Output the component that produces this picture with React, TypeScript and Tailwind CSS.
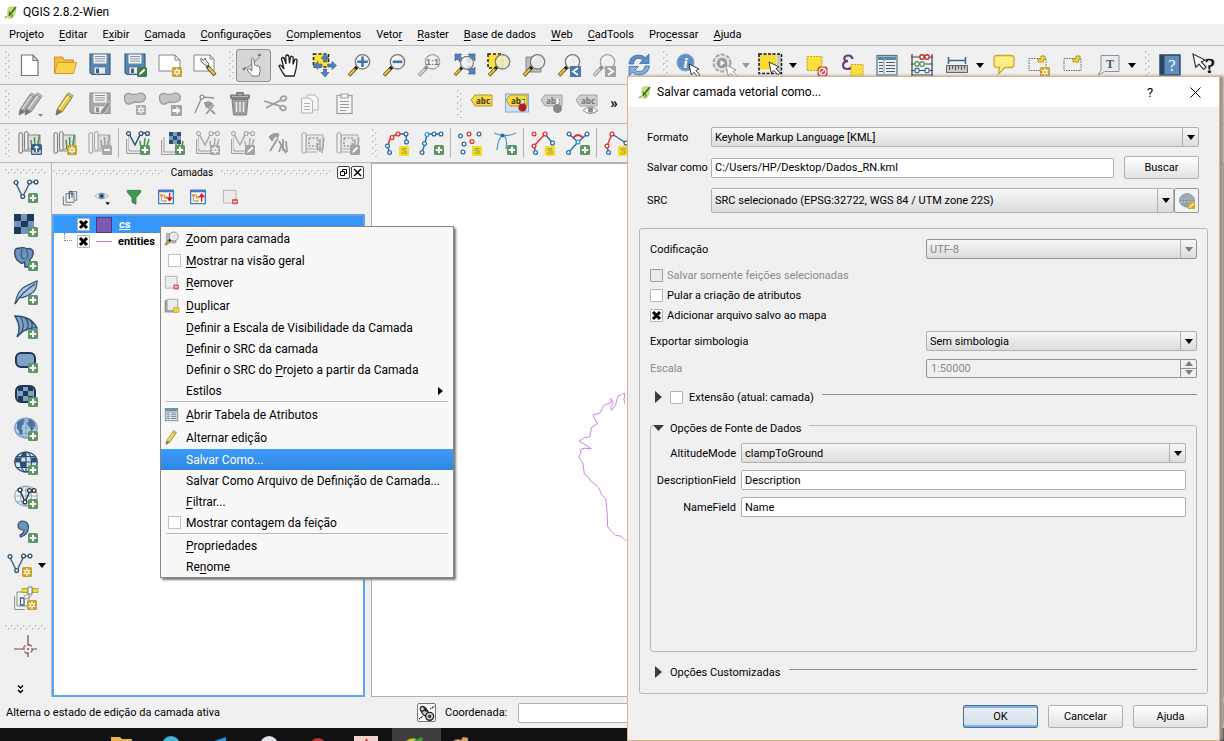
import { type ReactNode } from "react";
import clsx from "clsx";

/* ---------- icon parts ---------- */

const NAVY = "#2f4f70";
const GRAY = "#9b9b9b";
const BLUE = "#2e6da4";
const RED = "#e03232";

function PlusBadge({ x = 14, y = 14 }: { x?: number; y?: number }) {
  return (
    <g transform={`translate(${x} ${y})`}>
      <rect width="10" height="10" rx="1.5" fill="#5f9467" />
      <path d="M5 1.8v6.4M1.8 5h6.4" stroke="#fff" strokeWidth="2" />
    </g>
  );
}

function StarBadge({ x = 14, y = 14, gray }: { x?: number; y?: number; gray?: boolean }) {
  return (
    <g transform={`translate(${x} ${y})`}>
      <rect width="10" height="10" rx="1.5" fill={gray ? "#a9a9a9" : "#c9a227"} />
      <path d="M5 1.3v7.4M1.8 3.1l6.4 3.8M8.2 3.1L1.8 6.9" stroke="#fff" strokeWidth="1.4" />
      <circle cx="5" cy="5" r="1" fill={gray ? "#a9a9a9" : "#c9a227"} />
    </g>
  );
}

function SnapBadge({ x = 14, y = 15 }: { x?: number; y?: number }) {
  return (
    <g transform={`translate(${x} ${y})`}>
      <rect width="10" height="10" rx="1" fill="#f2dc2a" />
      <text x="5" y="8.4" textAnchor="middle" fontSize="9" fontWeight="700" fill="#a8a13a" fontFamily="Liberation Sans">
        S
      </text>
    </g>
  );
}

function PenBadge({ gray, x = 14, y = 14 }: { gray?: boolean; x?: number; y?: number }) {
  return (
    <g transform={`translate(${x} ${y})`}>
      <rect width="10" height="10" rx="1.5" fill={gray ? "#a3a3a3" : "#3f7f4c"} />
      <path d="M2 8l1-2.4L7 1.7l1.4 1.5L4.3 7z" fill="#fff" />
    </g>
  );
}

function Lens({ gray }: { gray?: boolean }) {
  return (
    <>
      <path d="M10 14L2 22.5" stroke={gray ? "#8a8a8a" : "#5b4a1c"} strokeWidth="3.6" />
      <path d="M8.5 15.5L2.3 22" stroke={gray ? "#d9d9d9" : "#f1c232"} strokeWidth="2" />
      <path d="M10.6 13.4L8 16" stroke={gray ? "#8a8a8a" : "#222"} strokeWidth="3" />
      <circle cx="15.5" cy="8.8" r="7.2" fill="#eef0f0" fillOpacity=".85" stroke={gray ? "#a3a3a3" : "#7c7c7c"} strokeWidth="1.3" />
      <path d="M10.5 8a5 5 0 0 1 4-4" stroke="#fff" strokeWidth="1.2" fill="none" />
    </>
  );
}

function Node({ x, y, c = NAVY }: { x: number; y: number; c?: string }) {
  return <circle cx={x} cy={y} r="1.9" fill="#fff" stroke={c} strokeWidth="1.3" />;
}

function Pencil({ main = "#e8c93f", edge = "#8a7420" }: { main?: string; edge?: string }) {
  return (
    <g>
      <path d="M3 23l1.3-6L14 2.5l5 3L9.3 19.6z" fill={main} stroke={edge} strokeWidth="1" />
      <path d="M14 2.5l1.3-1.7 5 3L19 5.5z" fill="#c4c4c4" stroke={edge} strokeWidth=".7" />
      <path d="M6 17.2L15.7 3.8" stroke="#fff" strokeOpacity=".6" strokeWidth="1.4" />
      <path d="M3 23l1.3-6 5 2.6z" fill="#777" />
    </g>
  );
}

function Floppy({ body, edge }: { body: string; edge: string }) {
  return (
    <g>
      <path d="M2 1h20v20.5H4L2 19.5z" fill={body} stroke={edge} strokeWidth="1.2" />
      <rect x="5.5" y="1.5" width="13" height="9" fill="#f3f6f9" />
      <path d="M7 3.5h10M7 5.8h10M7 8.1h10" stroke="#8b9096" strokeWidth="1" />
      <rect x="6" y="14" width="11.5" height="7" fill="#e8ebee" stroke={edge} strokeWidth=".6" />
      <rect x="8" y="15.5" width="3" height="4.5" fill={edge} />
    </g>
  );
}

function Blob() {
  return (
    <path
      d="M1.5 5Q2 1 7 1.5q4 2 9-.3 6-.5 6.5 4 0 4-5 5-3 .3-5 0-3 0-5.5 2Q1 12.5 1.5 5z"
      fill="#c4c4c4"
      stroke="#999"
      strokeWidth="1.2"
    />
  );
}

// rolled mapset with grass blades on its right side
function Mapset({ gray, children }: { gray?: boolean; children?: ReactNode }) {
  const c = gray ? "#a9a9a9" : "#858585";
  return (
    <g>
      <path d="M9 4h13v14H8z" fill="#dedede" stroke={c} />
      <path d="M1 3q2-3 3.5 0v18q-1.8 2.5-3.5 0zM6.5 2q2-3 3.5 0v16q-1.8 3-3.5 0z" fill="#f2f2f2" stroke={c} strokeWidth="1.2" />
      <path d="M4.5 20h14" stroke={c} />
      <path d="M14 18l-1-9M17 18l-.5-12M19 18l2.5-14" stroke={gray ? "#a0a0a0" : "#4d9152"} strokeWidth="1.5" />
      {children}
    </g>
  );
}

function MapRoll({ children }: { children?: ReactNode }) {
  return (
    <g>
      <path d="M5 4h17v14H5z" fill="#e8e8e8" stroke="#a9a9a9" />
      <path d="M1 3q2-3 4 0v18q-2 2.5-4 0z" fill="#f2f2f2" stroke="#a9a9a9" strokeWidth="1.2" />
      <path d="M8 7h9v8H8z" fill="none" stroke="#777" strokeDasharray="2 1.5" />
      <path d="M17 20l-1-8M19 21V8M21 22l2-15" stroke="#a0a0a0" strokeWidth="1.4" />
      <path d="M4 21h12" stroke="#a9a9a9" />
      {children}
    </g>
  );
}

function GrassVector({ gray, children }: { gray?: boolean; children?: ReactNode }) {
  const c = gray ? "#a9a9a9" : NAVY;
  return (
    <g>
      <path d="M3 4v16h12M.6 8v14.4h14" fill="none" stroke="#989898" />
      <path d="M3 5h18v13H3z" fill="#ececec" />
      <path d="M15 18l-1-8M18 18l1-11M20 18l3-10" stroke={gray ? "#aaa" : "#4d9152"} strokeWidth="1.5" />
      <path d="M2.5 2L9 14 15 2h6" fill="none" stroke={c} strokeWidth="1.5" />
      <Node x={2.5} y={2.5} c={c} />
      <Node x={15} y={2.5} c={c} />
      <Node x={21.5} y={2.5} c={c} />
      {children}
    </g>
  );
}

function VectorLine({ children }: { children?: ReactNode }) {
  return (
    <g>
      <path d="M1.7 4l7 14L16 3h6" fill="none" stroke="#4b6b8c" strokeWidth="1.6" />
      <Node x={2} y={3.5} />
      <Node x={8.7} y={17.5} />
      <Node x={15.5} y={3} />
      <Node x={22} y={3} />
      {children}
    </g>
  );
}

function Cursor({ x = 0, y = 0, gray }: { x?: number; y?: number; gray?: boolean }) {
  return (
    <path
      transform={`translate(${x} ${y})`}
      d="M0 0l2.3 11 2.6-2.6 4 4.4 2-2-4-4.2L10 5z"
      fill="#fff"
      stroke={gray ? "#999" : "#333"}
      strokeWidth="1"
    />
  );
}

function Tag({ gray, children }: { gray?: boolean; children?: ReactNode }) {
  return (
    <g>
      <path d="M1 8l4-5h17v11H5z" fill={gray ? "#cfcfcf" : "#f5d949"} stroke={gray ? "#a2a2a2" : "#b9971c"} />
      <text x="13" y="11.5" textAnchor="middle" fontSize="8" fontWeight="700" fontFamily="Open Sans" fill={gray ? "#777" : "#433a10"}>
        abc
      </text>
      {children}
    </g>
  );
}

function Globe({ fill, line }: { fill: string; line: string }) {
  return (
    <g fill="none" stroke={line} strokeWidth="1.2">
      <ellipse cx="12" cy="11" rx="11.3" ry="10" fill={fill} />
      <ellipse cx="12" cy="11" rx="5.5" ry="10" />
      <path d="M12 1v20M1 11h22M3 5.5h18M3 16.5h18" />
    </g>
  );
}

function TreeGlyph() {
  return (
    <g>
      <path d="M1 2h22v20H1z" fill="#fff" stroke="#3d7bc8" strokeWidth="2" />
      <path d="M1 1h22v4H1z" fill="#3d7bc8" />
      <path d="M5 9h5v3h4M5 9v9h6" fill="none" stroke="#777" strokeWidth="1.2" />
      <path d="M3 7.5h4.5v4H3zM9 11h4v3.5H9zM9 16.5h4V20H9z" fill="#eba73a" />
    </g>
  );
}

const icons: Record<string, ReactNode> = {
  newFile: <path d="M3.5 2H15l5 5.5v15H3.5zM15 2v5.5h5" fill="#fff" stroke="#777" strokeWidth="1.2" />,
  open: (
    <>
      <path d="M1.5 20V4h8l2 3h9v3" fill="#f2bd35" stroke="#c9962a" />
      <path d="M1.5 20.5l3-11h19l-3 11z" fill="#fbd24e" stroke="#d09c2c" />
    </>
  ),
  save: <Floppy body="#5a86b5" edge="#3b5f87" />,
  saveAs: (
    <>
      <Floppy body="#5a86b5" edge="#3b5f87" />
      <PenBadge />
    </>
  ),
  composer: (
    <>
      <path d="M1 2h16l5 5v11H1zM17 2v5h5" fill="#fff" stroke="#888" />
      <StarBadge />
    </>
  ),
  composerManager: (
    <>
      <path d="M1 2h16l4 4v12H1zM17 2v4h4" fill="#fff" stroke="#888" />
      <path d="M14 13l8 9" stroke="#5f4c18" strokeWidth="4" />
      <path d="M15.5 14.5l6 6.8" stroke="#eac95a" strokeWidth="2.2" />
      <path d="M8 5q-1 3 1.5 5t5 3l1.5-2Q12 7 12 5l-1.5 2.5z" fill="#eee" stroke="#666" />
    </>
  ),
  touch: (
    <>
      <path d="M2 16l4-2M6 14L18 4" stroke="#8a8a8a" />
      <path d="M1 17l2.5-2.5M16 2.5l3-1" stroke="#777" strokeWidth="2" />
      <path d="M10 23q-2-3-5-6l1.5-1.3L10 18 9.5 5.5q1.2-1.5 2.2 0l.8 6.5 5 1.5q1.5 4-.5 9.5z" fill="#fff" stroke="#777" />
    </>
  ),
  pan: (
    <path
      d="M8 23Q5 19 2 13q1-1.8 3 .5L7 16 4.5 5.5q1.3-2 2.8 0L9 11l-.2-8q1.5-2 3 0l.7 7.5 1-6.5q1.5-1.6 2.7.3L16 11.5l1.8-5q1.7-1 2.2.8Q19.5 17 17 23z"
      fill="#fff"
      stroke="#222"
      strokeWidth="1.3"
    />
  ),
  panSelection: (
    <>
      <rect x="1.5" y="1" width="15" height="13" fill="#fbe13c" stroke="#222" strokeWidth="1.6" strokeDasharray="3 2" />
      <path
        d="M13 1l4 4.500h-2.500V9h-3V5.500H9zM13 24l4-4.500h-2.500V16h-3v3.500H9zM1.500 12.500L6 8.500V11h4v3H6v2.500zM24.500 12.500L20 8.500V11h-4v3h4v2.500z"
        fill="#4f83b8"
        stroke="#2f5a88"
        strokeWidth=".6"
      />
    </>
  ),
  zoomIn: (
    <>
      <Lens />
      <path d="M15.5 3.5v10.6M10.2 8.8h10.6" stroke="#3f75ad" strokeWidth="2.6" />
    </>
  ),
  zoomOut: (
    <>
      <Lens />
      <path d="M10.7 8.8h9.6" stroke="#3f75ad" strokeWidth="2.6" />
    </>
  ),
  zoomNative: (
    <>
      <Lens gray />
      <text x="15.5" y="12" textAnchor="middle" fontSize="9" fontWeight="700" fontFamily="Liberation Sans" fill="#777">
        1:1
      </text>
    </>
  ),
  zoomFull: (
    <>
      <path
        d="M3 1h7L8 3l4 4-3 3-4-4-2 2zM23 1h-7l2 2-4 4 3 3 4-4 2 2zM23 21h-7l2-2-4-4 3-3 4 4 2-2z"
        fill="#4f83b8"
        stroke="#2f5a88"
        strokeWidth=".6"
      />
      <g transform="translate(1 2) scale(.9)">
        <Lens />
      </g>
    </>
  ),
  zoomSelection: (
    <>
      <rect x="1" y="1" width="15" height="14" fill="#fbe13c" stroke="#222" strokeWidth="1.5" strokeDasharray="3 2" />
      <Lens />
      <circle cx="15.5" cy="8.8" r="6" fill="#f0e79a" fillOpacity=".6" />
    </>
  ),
  zoomLayer: (
    <>
      <path d="M4 4h15v15H4z" fill="#bdbdbd" stroke="#888" />
      <Lens />
    </>
  ),
  zoomLast: (
    <>
      <Lens />
      <rect x="13" y="13" width="11" height="11" fill="#4a7aac" />
      <path d="M21 15l-5 3.5 5 3.5" fill="none" stroke="#fff" strokeWidth="1.8" />
    </>
  ),
  zoomNext: (
    <>
      <Lens gray />
      <rect x="13" y="13" width="11" height="11" fill="#a2a2a2" />
      <path d="M16 15l5 3.5-5 3.5" fill="none" stroke="#fff" strokeWidth="1.8" />
    </>
  ),
  refresh: (
    <>
      <path d="M2 11q0-8 9-9 5 0 7.5 2.5L22 1v9.500h-9.500L16 7q-2-1.800-5-1.600Q7 6 6.500 11z" fill="#5d8fc6" stroke="#3d6da3" strokeWidth=".8" />
      <path d="M22.5 13q-1 8-9.500 9-5 0-7.500-2.500L2 23v-9.500h9.500L8 17q2 1.800 5 1.600 4-.6 5-5.600z" fill="#83addb" stroke="#3d6da3" strokeWidth=".8" />
    </>
  ),
  identify: (
    <>
      <circle cx="9.5" cy="9.5" r="8.5" fill="#5f8fc6" stroke="#7ea7d4" />
      <text x="9.5" y="15" textAnchor="middle" fontSize="15" fontStyle="italic" fontWeight="700" fontFamily="Liberation Serif" fill="#fff">
        i
      </text>
      <Cursor x={13} y={11} />
    </>
  ),
  action: (
    <>
      <circle cx="11" cy="10" r="8.5" fill="#e4e4e4" stroke="#a5a5a5" strokeWidth="2" strokeDasharray="4 1.5" />
      <circle cx="11" cy="10" r="5.2" fill="#999" />
      <path d="M9.5 7l4.5 3-4.5 3z" fill="#fff" />
      <Cursor x={15} y={12} gray />
    </>
  ),
  select: (
    <>
      <path d="M19 1.5h4V20h-4z" fill="#c8c8c8" />
      <path d="M1.5 1.5h17v15h-17z" fill="#f7db35" />
      <path d="M1 1h22.5v19.5H1z" fill="none" stroke="#111" strokeWidth="1.5" strokeDasharray="3 1.5" />
      <Cursor x={11} y={9} />
    </>
  ),
  deselect: (
    <>
      <rect x="2" y="3.5" width="15" height="14" fill="#fbe13c" stroke="#c9a227" strokeDasharray="2 1" />
      <rect x="12.5" y="13.5" width="10" height="10" rx="2" fill="#d84242" />
      <circle cx="17.5" cy="18.5" r="3.3" fill="none" stroke="#fff" strokeWidth="1.2" />
      <path d="M15 21l5-5" stroke="#fff" strokeWidth="1.2" />
    </>
  ),
  epsilon: (
    <>
      <path d="M12.5 6q-.5-3.500-4-3.500-4 0-4.200 3 0 2.600 3.700 2.700Q3 8.600 3 12.500 3.300 16 7.500 16t5.500-3.500" fill="none" stroke="#6b3d78" strokeWidth="2.2" />
      <rect x="11" y="11.5" width="12" height="12" fill="#fbe13c" stroke="#c9a227" strokeDasharray="2 1" />
    </>
  ),
  table: (
    <>
      <rect x="2" y="2.5" width="20" height="19.5" fill="#eef2f5" stroke="#4f7389" strokeWidth="1.2" />
      <rect x="3" y="3.5" width="18" height="3.5" fill="#5e86a0" />
      <path d="M9 4v17" stroke="#7e9cae" />
      <path d="M4 9.5h4M11 9.5h9M4 12.5h4M11 12.5h9M4 15.5h4M11 15.5h9M4 18.5h4M11 18.5h9" stroke="#4e5e68" strokeWidth="1.2" />
    </>
  ),
  abacus: (
    <>
      <path d="M1 4h22M1 11h22M1 17.5h22M1 22h22M2 1v22M22 1v22" stroke="#444" strokeWidth="1.2" />
      <g fill="#fff" strokeWidth="1.4">
        <circle cx="12" cy="4" r="2.2" stroke="#c03030" />
        <circle cx="17" cy="4" r="2.2" stroke="#c03030" />
        <circle cx="7" cy="11" r="2.2" stroke="#5a9d60" />
        <circle cx="12" cy="11" r="2.2" stroke="#5a9d60" />
        <circle cx="7" cy="17.5" r="2.2" stroke="#4a7aac" />
        <circle cx="17" cy="17.5" r="2.2" stroke="#4a7aac" />
      </g>
    </>
  ),
  ruler: (
    <>
      <path d="M3 7.5h18M3.5 4v7M20.5 4v7" stroke="#3d6482" strokeWidth="1.5" />
      <path d="M1.5 12.500h21v7h-21z" fill="#c9c9bf" stroke="#666" />
      <path d="M4.5 13v4M7.5 13v3M10.5 13v4M13.5 13v3M16.5 13v4M19.5 13v3" stroke="#555" />
    </>
  ),
  bubble: (
    <path d="M5 2.5h14q3 0 3 3v6q0 3-3 3h-6L6.500 21l1-6.500H5q-3 0-3-3v-6q0-3 3-3z" fill="#fbec85" stroke="#cba92c" strokeWidth="1.3" />
  ),
  bookmarkNew: (
    <>
      <path d="M2 5.5h17v12H2z" fill="none" stroke="#666" strokeDasharray="1.5 1" />
      <path d="M14 3h4v3.5h-1.5V9H11V6h3z" fill="#f3d83c" stroke="#b9971c" />
      <StarBadge x={13} y={14} />
    </>
  ),
  bookmark: (
    <>
      <path d="M2 5.5h17v12H2z" fill="none" stroke="#666" strokeDasharray="1.5 1" />
      <path d="M14 3h4v3.5h-1.5V9H11V6h3z" fill="#f3d83c" stroke="#b9971c" />
    </>
  ),
  textNote: (
    <>
      <path d="M4 2.5h18v16H8L1 22l3-5z" fill="#e7ebee" stroke="#8295a3" />
      <text x="13" y="15" textAnchor="middle" fontSize="12" fontWeight="700" fontFamily="Liberation Serif" fill="#555">
        T
      </text>
    </>
  ),
  help: (
    <>
      <path d="M2 2h20v20H2z" fill="#5f8dc0" stroke="#2d4460" strokeWidth="1.4" />
      <path d="M2 2h4.5v20H2z" fill="#2d4460" />
      <text x="14" y="17.5" textAnchor="middle" fontSize="16" fontFamily="Liberation Serif" fill="#fff">
        ?
      </text>
    </>
  ),
  whatsThis: (
    <>
      <g transform="translate(0 1) scale(1.2)">
        <Cursor />
      </g>
      <text x="17" y="20" textAnchor="middle" fontSize="22" fontFamily="Liberation Serif" fill="#111" stroke="#111" strokeWidth=".7">
        ?
      </text>
    </>
  ),
  edits: (
    <>
      <g transform="translate(-2 0)">
        <Pencil main="#a8a8a8" edge="#858585" />
      </g>
      <g transform="translate(4 0)">
        <Pencil main="#b0b0b0" edge="#858585" />
      </g>
      <path d="M20 22h5l-2.5 3z" fill="#888" />
    </>
  ),
  pencil: <Pencil />,
  saveEdits: (
    <>
      <Floppy body="#aaaaaa" edge="#8e8e8e" />
      <path d="M12 23l1-4.5 7-9 3 2-6.500 9.500z" fill="#8f8f8f" stroke="#eee" strokeWidth=".6" />
    </>
  ),
  addFeature: (
    <>
      <Blob />
      <StarBadge x={13} y={13} gray />
    </>
  ),
  moveFeature: (
    <>
      <Blob />
      <rect x="13" y="13" width="11" height="11" fill="#a5a5a5" />
      <path d="M14.5 17h4v-2.500l4 4-4 4V20h-4z" fill="#fff" />
    </>
  ),
  nodeTool: (
    <>
      <path d="M2 21L9 5l12 1" fill="none" stroke="#8f8f8f" strokeWidth="1.3" />
      <Node x={9} y={5} c="#8f8f8f" />
      <path d="M12 11q4-2 7 1l-2 2-1.500-1-2 2zM13 22l8-9M22 22l-7-7" fill={GRAY} stroke={GRAY} strokeWidth="1.8" />
    </>
  ),
  trash: (
    <>
      <path d="M4 7.5h16L18.500 23h-13z" fill="#9d9d9d" stroke="#7f7f7f" />
      <path d="M3 3.5h18V6H3zM9 3.500V1h6v2.500" fill="none" stroke="#7f7f7f" strokeWidth="1.8" />
      <path d="M8.5 10v10M12 10v10M15.5 10v10" stroke="#e8e8e8" strokeWidth="1.6" />
    </>
  ),
  cut: (
    <g fill="none" stroke={GRAY} strokeWidth="1.6">
      <path d="M1 9l16 5M3 16L18 8" />
      <ellipse cx="20.5" cy="6.5" rx="3" ry="2.2" transform="rotate(-25 20.5 6.5)" />
      <ellipse cx="20" cy="16" rx="3" ry="2.2" transform="rotate(25 20 16)" />
    </g>
  ),
  copy: (
    <g fill="#f6f6f6" stroke="#b4b4b4">
      <path d="M9 3h8l3 3v12H9z" />
      <path d="M3.5 6h8l3 3v12h-11zM6 11.500h6M6 14.500h6M6 17.500h6" />
    </g>
  ),
  paste: (
    <g fill="#f4f4f4" stroke="#9b9b9b" strokeWidth="1.2">
      <rect x="4" y="3.5" width="15" height="18" />
      <path d="M8 2h7v4H8zM7 9.5h9M7 12.5h9M7 15.5h9M7 18.5h6" />
    </g>
  ),
  label: <Tag />,
  labelPin: (
    <>
      <rect x=".5" y="2" width="23" height="18" fill="#cfe1f3" stroke="#7fb0dd" />
      <Tag />
      <path d="M16 14V8.5q1.500-2 3 0V14z" fill="#fff" stroke="#777" strokeWidth=".6" />
      <circle cx="17.5" cy="15.5" r="4" fill="#b21f1f" />
    </>
  ),
  labelMove: (
    <Tag gray>
      <path d="M16 14V6.5q1.500-2 3 0V14z" fill="#fff" stroke="#999" strokeWidth=".6" />
      <circle cx="17.5" cy="16.5" r="4.5" fill="#888" />
    </Tag>
  ),
  labelShow: (
    <Tag gray>
      <path d="M8 18.5q7-7 15 0-8 6-15 0z" fill="#fff" stroke="#888" />
      <circle cx="15.5" cy="18" r="2.6" fill="#888" />
    </Tag>
  ),
  meshOpen: (
    <Mapset>
      <rect x="13" y="13" width="11" height="11" rx="1.5" fill="#3a6286" />
      <path d="M15 19v3h7v-3M18.5 21v-6M16.5 17l2-2 2 2" fill="none" stroke="#fff" strokeWidth="1.2" />
    </Mapset>
  ),
  meshNew: (
    <Mapset>
      <StarBadge />
    </Mapset>
  ),
  meshClose: (
    <Mapset gray>
      <rect x="14" y="14" width="10" height="10" rx="1.5" fill="#a9a9a9" />
      <path d="M16 19h6" stroke="#fff" strokeWidth="1.8" />
    </Mapset>
  ),
  grassVector: (
    <GrassVector>
      <PlusBadge />
    </GrassVector>
  ),
  grassRaster: (
    <>
      <path d="M3 6v15h13M.6 9v14.400h14" fill="none" stroke="#989898" />
      <path d="M15 20V9M18 20V8M20 20l2-10" stroke="#4d9152" strokeWidth="1.6" />
      <path d="M8 1h12v12H8z" fill="#7d9dc0" />
      <path d="M8 1h4v4H8zM16 1h4v4h-4zM12 5h4v4h-4zM8 9h4v4H8zM16 9h4v4h-4z" fill={NAVY} />
      <PlusBadge />
    </>
  ),
  grassNew: (
    <GrassVector gray>
      <StarBadge gray />
    </GrassVector>
  ),
  grassEdit: (
    <GrassVector gray>
      <PenBadge gray />
    </GrassVector>
  ),
  grassTools: (
    <g fill={GRAY} stroke={GRAY}>
      <path d="M3 6q4-5 10-3l-1 3-3-.5L6 10z" />
      <path d="M4 20L12 7M13 10l7 12M13 21l3-8M17 20V8M21 21l-1-11" strokeWidth="1.8" fill="none" />
    </g>
  ),
  grassRegion: <MapRoll />,
  grassRegionEdit: (
    <MapRoll>
      <PenBadge gray />
    </MapRoll>
  ),
  cadArc: (
    <>
      <path d="M3 15Q4 4 14 3" fill="none" stroke={RED} strokeWidth="1.4" />
      <path d="M14 3h7l.5 8M2.500 15l2 6.500" stroke={BLUE} strokeWidth="1.4" fill="none" />
      <Node x={2.5} y={15} c={BLUE} />
      <Node x={7} y={6.5} c={RED} />
      <Node x={13} y={3} c={RED} />
      <Node x={21} y={3} c={BLUE} />
      <Node x={21.5} y={11} c={BLUE} />
      <Node x={4.5} y={21.5} c={BLUE} />
      <SnapBadge />
    </>
  ),
  cadExtend: (
    <>
      <path d="M2 21.5l3-9L7 3h14" fill="none" stroke={BLUE} strokeWidth="1.4" />
      <Node x={2} y={21.5} c={BLUE} />
      <Node x={4.5} y={12.5} c={BLUE} />
      <Node x={7} y={3.5} c="#2e9be0" />
      <Node x={14} y={3} c={BLUE} />
      <Node x={21} y={3} c={BLUE} />
      <PlusBadge />
    </>
  ),
  cadPoints: (
    <>
      <Node x={2.5} y={5} c={BLUE} />
      <Node x={11} y={3} c={RED} />
      <Node x={21} y={3} c={BLUE} />
      <Node x={6} y={13} c={BLUE} />
      <Node x={14} y={10.5} c={RED} />
      <Node x={5} y={21} c={BLUE} />
      <SnapBadge />
    </>
  ),
  cadTangent: (
    <>
      <path d="M1 2q12 5 22 0M4 19Q5 7 10 4q5 3 3 14" fill="none" stroke="#4f9cc8" strokeWidth="1.3" />
      <circle cx="9.5" cy="4.5" r="2" fill={BLUE} />
      <PlusBadge />
    </>
  ),
  cadRotate: (
    <>
      <path d="M14 3l7.5 9M3 15l1.500 6.500" stroke={BLUE} strokeWidth="1.4" />
      <path d="M3 15L14 3" stroke={RED} strokeWidth="1.4" />
      <Node x={3} y={3} c={RED} />
      <Node x={14} y={3} c={RED} />
      <Node x={3} y={15} c={RED} />
      <Node x={21.5} y={12} c={BLUE} />
      <Node x={4.5} y={21.5} c={BLUE} />
      <SnapBadge />
    </>
  ),
  cadAngle: (
    <>
      <path d="M3 3l9 8 9-8M12 11L2.5 21.500" fill="none" stroke={BLUE} strokeWidth="1.4" />
      <path d="M7 7q5-6 10 0" fill="none" stroke={RED} strokeWidth="1.8" />
      <Node x={3} y={3} c={BLUE} />
      <Node x={21} y={3} c={BLUE} />
      <Node x={12} y={11} c="#2e9be0" />
      <Node x={2.5} y={21.5} c={BLUE} />
      <PlusBadge />
    </>
  ),
  cadTriangle: (
    <>
      <path d="M3 15L8 3" stroke={RED} strokeWidth="1.4" />
      <path d="M8 3l14 9M3 15l1.5 6.500" stroke={BLUE} strokeWidth="1.4" />
      <Node x={8} y={3} c={RED} />
      <Node x={3} y={15} c={RED} />
      <Node x={22} y={12} c={BLUE} />
      <Node x={4.5} y={21.5} c={BLUE} />
      <SnapBadge />
    </>
  ),
  addVector: (
    <VectorLine>
      <PlusBadge />
    </VectorLine>
  ),
  addRaster: (
    <>
      <path d="M0 1h20v20H0z" fill="#6f93bd" />
      <path d="M0 1h7v7H0zM13 1h7v7h-7zM7 8h7v6H7zM0 14h7v7H0z" fill="#1f3854" />
      <PlusBadge />
    </>
  ),
  addPostgis: (
    <>
      <path
        d="M1 4q0-3 5-3 4-1 7 1 4-1.5 6 2 1 5-3 8.500l-.5 7.500H11l-.5-5-3 1.500L3 13Q0 9 1 4z"
        fill="#6f93bd"
        stroke={NAVY}
        strokeWidth="1.4"
      />
      <path d="M8 2q-2 6 0 9l3 1M12.5 2.500q3 5 0 10" fill="none" stroke={NAVY} />
      <PlusBadge />
    </>
  ),
  addSpatialite: (
    <>
      <path d="M1 23Q3 9 12 5l11-5q0 9-5 12-5 4-13 5z" fill="#a9c4de" stroke={NAVY} strokeWidth="1.2" />
      <path d="M1 23Q7 12 21 3" fill="none" stroke={NAVY} strokeWidth="1.2" />
      <PlusBadge />
    </>
  ),
  addMssql: (
    <>
      <path d="M1 1q16 0 22 12-12-1-20 9 5-10-2-21z" fill="#7fa1c8" stroke={NAVY} strokeWidth="1.4" />
      <path d="M6 1.5q6 8 1 17M11 2.500q6 7 1 13M16 5q4 4 1 9" fill="none" stroke={NAVY} strokeWidth="1.2" />
      <PlusBadge />
    </>
  ),
  addOracle: (
    <>
      <rect x="2" y="4" width="19" height="14" rx="5" fill="#7fa1c8" stroke="#1f3854" strokeWidth="2" />
      <PlusBadge />
    </>
  ),
  addGeoRaster: (
    <>
      <rect x="2" y="3" width="19" height="16" rx="5" fill="#7fa1c8" stroke="#1f3854" strokeWidth="2" />
      <path d="M4 3h5v5H4zM14 3h5v5h-5zM9 8h5v5H9zM4 13h5v5H4zM14 13h5v5h-5z" fill="#1f3854" />
      <PlusBadge />
    </>
  ),
  addWms: (
    <>
      <Globe fill="#b5cfe6" line="#7fa1c8" />
      <path
        d="M3 6l3-3 4-1 1 2-2 1 1 2-2 2-1 3 2 1-1 4-2 1-1-4-2-3zM13 3l4-1 3 3 2 4-2 1-1 3-2 1-1-4-2-1-1-3 2-1zM15 15l2 1-1 3z"
        fill="#3d6690"
        fillOpacity=".85"
      />
      <PlusBadge />
    </>
  ),
  addWcs: (
    <>
      <Globe fill="#d4e2ef" line={NAVY} />
      <path d="M1.5 6.500h5V11H1zM17.500 6.500h5l.5 4.500h-5.500zM6.500 11H12v5.500H7zM8 1.500h4v5H7zM17 16.500h3L15 21z" fill={NAVY} />
      <PlusBadge />
    </>
  ),
  addWfs: (
    <>
      <Globe fill="#f1f6fa" line="#8fb0d3" />
      <path d="M6 5l5 12 5-11h4" fill="none" stroke="#333" strokeWidth="1.4" />
      <Node x={6} y={5} c="#333" />
      <Node x={11} y={17} c="#333" />
      <Node x={15.5} y={5.5} c="#333" />
      <Node x={20} y={5.5} c="#333" />
      <PlusBadge />
    </>
  ),
  addCsv: (
    <>
      <path d="M6 16q4-2 4-5Q4 11 4 6.500 4.500 2 9 2q5.500.5 5.500 6.500Q14 16 6.500 18z" fill="#6f93bd" stroke={NAVY} strokeWidth="1.2" />
      <PlusBadge />
    </>
  ),
  newVector: (
    <VectorLine>
      <StarBadge />
    </VectorLine>
  ),
  gps: (
    <>
      <path d="M3 5h12v14H3zM.6 9v13.500h10" fill="#f2f2f2" stroke="#8b8b8b" />
      <path d="M6.5 11H10v7H6.500z" fill="#fff" stroke="#3a6286" strokeWidth="1.3" />
      <path d="M8 1.5h6v4H8zM18 1.500h6v4h-6z" fill="#e8e03a" stroke="#a79b20" strokeWidth=".8" />
      <path d="M14 0h4v7h-4z" fill="#fff" stroke="#777" />
      <path d="M10 9q3 0 4-3M11 12q6-1 7-5" fill="none" stroke="#999" />
      <StarBadge x={13} y={13} />
    </>
  ),
  crosshair: (
    <>
      <path d="M0 14h11M17 14h6M14 0v11M14 17v5" stroke="#555" strokeWidth="1.2" />
      <circle cx="14" cy="14" r="4.5" fill="none" stroke="#c04848" strokeWidth="1.3" strokeDasharray="4 3" />
      <path d="M14 13v2M13 14h2" stroke="#555" />
    </>
  ),
  group: (
    <g fill="none" stroke="#777" strokeWidth="1.5">
      <path d="M6 7h12v13H6zM2 11v13h12M10 4h12v13h-3" />
      <path d="M11 15V5q2-3 4 0v8" stroke="#3a6286" strokeWidth="1.8" />
    </g>
  ),
  eye: (
    <>
      <path d="M1 11Q11 1 22 11 11 19 1 11z" fill="#e9eef2" stroke="#999" />
      <circle cx="11.5" cy="10.5" r="4.5" fill="#5f8dc0" />
      <circle cx="11.5" cy="10.5" r="2" fill="#222" />
      <path d="M17 20h7l-3.5 4z" fill="#111" />
    </>
  ),
  filter: <path d="M2 2h20v3l-7 8v10l-6-3v-7L2 5z" fill="#3e9a50" stroke="#2b7439" strokeWidth="1.2" />,
  expand: (
    <>
      <TreeGlyph />
      <path d="M17.5 6v9M14.5 13.500l3 4 3-4z" fill="#e11" stroke="#e11" strokeWidth="2" />
    </>
  ),
  collapse: (
    <>
      <TreeGlyph />
      <path d="M17.5 19v-9M14.5 11.500l3-4 3 4z" fill="#e11" stroke="#e11" strokeWidth="2" />
    </>
  ),
  removeLayer: (
    <>
      <path d="M2 2h19v19H2z" fill="#ececec" stroke="#b3b3b3" strokeWidth="1.5" />
      <rect x="15" y="15" width="9" height="8" rx="1.5" fill="#df5b5b" />
      <path d="M17 19h5" stroke="#fff" strokeWidth="1.8" />
    </>
  ),
  duplicateLayer: (
    <>
      <path d="M1 3v20h18v-3H5V3z" fill="#999" />
      <path d="M5 2h17v18H5z" fill="#ececec" stroke="#a3a3a3" strokeWidth="1.5" />
      <rect x="15" y="15" width="9" height="8" rx="1" fill="#efd34a" stroke="#b9971c" />
    </>
  ),
  crs: (
    <>
      <Globe fill="#9dbfdc" line="#7b8c99" />
      <path d="M1 11h22Q21 1 12 1T1 11z" fill="#a9a9a9" fillOpacity=".7" />
      <rect x="13" y="13" width="11" height="11" fill="#d1ab2a" />
      <path d="M15 22l6-7 1.5 1.500-6 6z" fill="#fff" />
    </>
  ),
  mouse: (
    <g fill="#ccc" stroke="#222" strokeWidth="2">
      <path d="M2 7q-1-5 4-5 4 1 8 9 1 5-3 6-5-1-9-10zM4 10l7-4M7 3l4 7" />
      <circle cx="16" cy="17" r="6" />
      <circle cx="16" cy="17" r="1.5" />
      <path d="M17 6l6-4M0 21l6-4" strokeDasharray="2 1" />
    </g>
  ),
  logo: (
    <>
      <path d="M8 3Q15 0 20 2q3 4 1 10-2 8-8 11-5 0-6-4Q6 10 8 3z" fill="#c6e07a" stroke="#9bbf4c" />
      <path d="M2 22l4-3" stroke="#a5a03c" strokeWidth="3" />
      <path d="M10 10v5M15 15l-1 6" stroke="#3f7a2a" strokeWidth="2" />
      <path d="M9 18L22 2" stroke="#2d6b26" strokeWidth="3" />
    </>
  ),
};

function Icon({ name, className = "h-6 w-6" }: { name: string; className?: string }) {
  return (
    <svg viewBox="0 0 24 24" className={clsx("block shrink-0 overflow-visible", className)} aria-hidden="true">
      {icons[name]}
    </svg>
  );
}

/* ---------- small widgets ---------- */

// "&" marks the letter that is underlined
function Mnemonic({ text }: { text: string }) {
  const at = text.indexOf("&");
  if (at < 0) return <>{text}</>;
  return (
    <>
      {text.slice(0, at)}
      <span className="underline underline-offset-2">{text[at + 1]}</span>
      {text.slice(at + 2)}
    </>
  );
}

function Caret({ className }: { className?: string }) {
  return (
    <svg viewBox="0 0 8 5" className={clsx("h-[5px] w-2 fill-current", className)} aria-hidden="true">
      <path d="M0 0h8L4 5z" />
    </svg>
  );
}

function Grip() {
  return (
    <div className="ml-[2px] flex w-3 shrink-0 justify-end pr-[2px] first:ml-0">
      <svg className="h-7 w-[5px]" aria-hidden="true">
        <defs>
          <pattern id="grip" width="5" height="6" patternUnits="userSpaceOnUse">
            <path d="M0 0h2v2H0zM3 3h2v2H3z" fill="#c6c6c6" />
            <path d="M1 1h1v1H1zM4 4h1v1H4z" fill="#fff" />
          </pattern>
        </defs>
        <rect width="5" height="28" fill="url(#grip)" />
      </svg>
    </div>
  );
}

function GripRow({ className }: { className?: string }) {
  return (
    <svg className={clsx("h-[5px]", className)} aria-hidden="true">
      <defs>
        <pattern id="grip-row" width="6" height="5" patternUnits="userSpaceOnUse">
          <path d="M0 0h2v2H0zM3 3h2v2H3z" fill="#c6c6c6" />
          <path d="M1 1h1v1H1zM4 4h1v1H4z" fill="#fff" />
        </pattern>
      </defs>
      <rect width="100%" height="5" fill="url(#grip-row)" />
    </svg>
  );
}

function ToolButton({ name, pressed }: { name: string; pressed?: boolean }) {
  return (
    <button
      type="button"
      aria-label={name}
      aria-pressed={pressed}
      className={clsx(
        "flex h-[33px] w-[35px] shrink-0 items-center justify-center",
        pressed && "rounded-[3px] border border-[#8e8e8e] bg-[#d6d6d6]"
      )}
    >
      <Icon name={name} />
    </button>
  );
}

function DropArrow({ disabled }: { disabled?: boolean }) {
  return (
    <button
      type="button"
      aria-label="more"
      className={clsx("flex h-[33px] w-3 shrink-0 items-center justify-center", disabled ? "text-[#9a9a9a]" : "text-black")}
    >
      <Caret className="shrink-0" />
    </button>
  );
}

function Separator() {
  return <div className="mx-px h-[30px] w-px shrink-0 bg-[#b4b4b4]" />;
}

function CheckBox({
  id,
  checked,
  disabled,
  label,
}: {
  id: string;
  checked?: boolean;
  disabled?: boolean;
  label?: string;
}) {
  return (
    <span className="grid h-[13px] w-[13px] shrink-0">
      <input
        id={id}
        type="checkbox"
        aria-label={label}
        defaultChecked={checked}
        disabled={disabled}
        className="peer h-[13px] w-[13px] appearance-none rounded-[1px] border border-[#b5b5b5] bg-white [grid-area:1/1] disabled:border-[#9c9c9c] disabled:bg-[#eaeaea]"
      />
      <svg viewBox="0 0 13 13" className="pointer-events-none invisible h-[13px] w-[13px] [grid-area:1/1] peer-checked:visible" aria-hidden="true">
        <path d="M3 3l7 7M10 3l-7 7" stroke="#000" strokeWidth="3" />
      </svg>
    </span>
  );
}

function Combo({ id, value, disabled, className }: { id: string; value: string; disabled?: boolean; className?: string }) {
  return (
    <span className={clsx("grid min-w-0 flex-1", className)}>
      <select
        id={id}
        disabled={disabled}
        className="h-full w-full appearance-none rounded-[2px] border border-[#b0b0b0] bg-linear-to-b from-[#f7f7f7] to-[#dcdcdc] pl-[3px] pr-5 text-black opacity-100 [grid-area:1/1] disabled:border-[#949494] disabled:text-[#858585]"
      >
        <option>{value}</option>
      </select>
      <span
        className={clsx(
          "pointer-events-none my-px mr-px flex w-4 items-center justify-center justify-self-end border-l border-[#b0b0b0] [grid-area:1/1]",
          disabled ? "text-[#7c7c7c]" : "text-black"
        )}
      >
        <Caret />
      </span>
    </span>
  );
}

const textBox = "h-5 min-w-0 flex-1 rounded-[2px] border border-[#b0b0b0] bg-white px-[3px]";

function PushButton({ children, primary }: { children: string; primary?: boolean }) {
  return (
    <button
      type="button"
      className={clsx(
        "h-[23px] w-[75px] shrink-0 rounded-[2px] border",
        primary
          ? "border-[#4a6e94] bg-linear-to-b from-[#e9eff5] to-[#d3dfeb] shadow-[inset_0_2px_0_#7fb2ea,inset_0_-2px_0_#7fb2ea]"
          : "border-[#b0b0b0] bg-linear-to-b from-white to-[#e2e2e2]"
      )}
    >
      {children}
    </button>
  );
}

/* ---------- main window ---------- */

const menus = [
  "Pro&jeto",
  "&Editar",
  "E&xibir",
  "&Camada",
  "&Configurações",
  "&Complementos",
  "Veto&r",
  "&Raster",
  "&Base de dados",
  "&Web",
  "&CadTools",
  "Pro&cessar",
  "&Ajuda",
];

// "|" is a separator, "grip" a toolbar handle, "v" a drop-down arrow
function ToolRow({ items }: { items: string[] }) {
  return (
    <div className="flex h-[39px] items-center overflow-hidden border-b border-[#b8b8b8]">
      {items.map((item, i) => {
        if (item === "|") return <Separator key={i} />;
        if (item === "grip") return <Grip key={i} />;
        if (item === "gap") return <div key={i} className="w-[88px] shrink-0" />;
        if (item === "v") return <DropArrow key={i} />;
        if (item === "v-off") return <DropArrow key={i} disabled />;
        if (item === "more")
          return (
            <button key={i} type="button" className="w-5 shrink-0 pb-[2px] text-[15px] leading-none font-bold">
              »
            </button>
          );
        return <ToolButton key={i} name={item} pressed={item === "touch"} />;
      })}
    </div>
  );
}

const fileTools =
  "grip newFile open save saveAs composer composerManager grip touch pan panSelection zoomIn zoomOut zoomNative zoomFull zoomSelection zoomLayer zoomLast zoomNext refresh grip identify action v-off select v deselect epsilon table abacus ruler v bubble bookmarkNew bookmark textNote v grip help whatsThis";
const editTools =
  "grip edits pencil saveEdits addFeature moveFeature nodeTool trash cut copy paste gap grip label labelPin labelMove labelShow more";
const grassTools =
  "grip meshOpen meshNew meshClose | grassVector grassRaster grassNew grassEdit grassTools grassRegion grassRegionEdit grip cadArc cadExtend | cadPoints cadTangent | cadRotate cadAngle | cadTriangle";

const layerTools = [
  "addVector",
  "addRaster",
  "addPostgis",
  "addSpatialite",
  "addMssql",
  "addOracle",
  "addGeoRaster",
  "addWms",
  "addWcs",
  "addWfs",
  "addCsv",
  "newVector",
  "gps",
];

function LayerToolbar() {
  return (
    <aside className="flex w-[52px] shrink-0 flex-col items-center border-r border-[#b8b8b8] pt-[6px]">
      <GripRow className="w-[42px] shrink-0" />
      {layerTools.map((name) => (
        <div key={name} className="flex h-[34px] w-full shrink-0 items-center pl-[14px]">
          <button type="button" aria-label={name} className={clsx(name === "newVector" && "-ml-[6px]")}>
            <Icon name={name} />
          </button>
          {name === "newVector" && <Caret className="ml-[6px]" />}
        </div>
      ))}
      <GripRow className="mt-[9px] w-[42px] shrink-0" />
      <button type="button" aria-label="crosshair" className="mt-[5px] shrink-0">
        <Icon name="crosshair" />
      </button>
      <button type="button" aria-label="more" className="mt-[26px] mr-[10px] text-black">
        <svg viewBox="0 0 7 9" className="h-[9px] w-[7px] fill-none stroke-current stroke-[1.5]" aria-hidden="true">
          <path d="M1 .5L3.500 3 6 .5M1 5l2.500 2.500L6 5" />
        </svg>
      </button>
    </aside>
  );
}

function LayersPanel() {
  return (
    <section className="flex w-[314px] shrink-0 flex-col">
      <header className="flex h-[17px] items-center gap-[6px] pt-px pl-px">
        <GripRow className="min-w-0 flex-1" />
        <h2 className="px-[2px] text-[10px]">Camadas</h2>
        <GripRow className="min-w-0 flex-1" />
        <div className="flex gap-px">
          <button type="button" aria-label="float" className="h-[13px] w-[13px] rounded-[2px] border border-[#444] bg-white">
            <svg viewBox="0 0 11 11" className="block fill-none stroke-black" aria-hidden="true">
              <path d="M2.5 4.500h4v4h-4zM4.500 4V2.500h4v4H7" />
            </svg>
          </button>
          <button type="button" aria-label="close" className="mr-[2px] h-[13px] w-[13px] rounded-[2px] border border-[#444] bg-white">
            <svg viewBox="0 0 11 11" className="block stroke-black stroke-[1.5]" aria-hidden="true">
              <path d="M2 2l7 7M9 2L2 9" />
            </svg>
          </button>
        </div>
      </header>
      <div className="flex h-[34px] items-center gap-4 pl-[10px]">
        {["group", "eye", "filter", "expand", "collapse", "removeLayer"].map((name) => (
          <button key={name} type="button" aria-label={name}>
            <Icon name={name} className="h-4 w-4" />
          </button>
        ))}
      </div>
      <ul className="mr-px flex-1 border-2 border-[#5aa6f3] bg-white">
        <li className="flex h-[17px] items-center bg-[#3399ff] pl-[10px] font-bold text-white">
          <span className="mr-[5px] h-px w-2 border-t border-dotted border-[#888]" />
          <CheckBox id="layer-cs" checked label="cs" />
          <span className="mx-[6px] h-4 w-4 border border-[#4d3a80] bg-[#7d59b2]" />
          <span className="flex-1 border border-dotted border-[#77808a] leading-[14px] underline">cs</span>
        </li>
        <li className="flex h-4 items-center pl-[10px] font-bold">
          <span className="mr-[5px] mb-2 h-2 w-2 border-b border-l border-dotted border-[#888]" />
          <CheckBox id="layer-entities" checked label="entities" />
          <span className="mx-[6px] h-px w-4 bg-[#c77be0]" />
          entities
        </li>
      </ul>
    </section>
  );
}

function MapCanvas() {
  return (
    <section className="ml-[5px] min-w-0 flex-1 border border-[#b0b0b0] bg-white pt-[229px] pl-[204px]">
      <svg viewBox="650 40 150 460" className="h-[153px] w-[50px]" aria-hidden="true">
        <path
          d="M797 72l-3-12 3-18h-8l-6 6-5-1-6 14-3 15-6 6-6 10-4-8 9-14-5-10-3-4 2 12-24 10-4 10-6 12-21 6 5 12 8 14-18 12-2 14-3 14-15 2-17 11 18 10 19 13-18-2-12 2-3 6 2 6-7 12 12 18 3 20 2 14 12 8 6 12 12 8 12 12 6 12 4 10 12 12 2 16 2 20 1 18 1 30 12 14 12 12 16 2 10 10 10 10"
          fill="none"
          stroke="#d07ee6"
          strokeWidth="3"
        />
      </svg>
    </section>
  );
}

type MenuEntry = { text: string; icon?: string; check?: string; sub?: boolean; active?: boolean } | null;

const layerMenu: MenuEntry[] = [
  { text: "&Zoom para camada", icon: "zoomLayer" },
  { text: "&Mostrar na visão geral", check: "overview" },
  { text: "&Remover", icon: "removeLayer" },
  { text: "&Duplicar", icon: "duplicateLayer" },
  { text: "&Definir a Escala de Visibilidade da Camada" },
  { text: "&Definir o SRC da camada" },
  { text: "Definir o SRC do &Projeto a partir da Camada" },
  { text: "Estilos", sub: true },
  null,
  { text: "&Abrir Tabela de Atributos", icon: "table" },
  { text: "Alternar edição", icon: "pencil" },
  { text: "Salvar Como...", active: true },
  { text: "Salvar Como Arquivo de Definição de Camada..." },
  { text: "&Filtrar..." },
  { text: "Mostrar contagem da feição", check: "count" },
  null,
  { text: "&Propriedades" },
  { text: "Re&nome" },
];

function LayerMenu() {
  return (
    <div
      role="menu"
      className="absolute top-[226px] left-[160px] w-[294px] border border-[#858585] bg-[#f8f8f8] text-[12px] leading-4 shadow-[2px_2px_2px_#7d7d7d]"
    >
      {layerMenu.map((entry, i) =>
        entry === null ? (
          <div key={i} className="mx-[5px] mb-px h-px bg-[#b8b8b8]" />
        ) : (
          <button
            key={i}
            type="button"
            role="menuitem"
            className={clsx(
              "flex w-full items-center whitespace-nowrap",
              entry.icon ? "h-[23px]" : "h-[21px]",
              entry.active && "bg-linear-to-b from-[#3d9bff] to-[#2f86de] text-white"
            )}
          >
            <span className="flex w-[25px] shrink-0 items-center pl-[3px]">
              {entry.icon && <Icon name={entry.icon} className="h-[15px] w-[15px]" />}
              {entry.check && <span className="ml-1 h-[13px] w-[13px] border border-[#c3c3c3] bg-white" />}
            </span>
            <span>
              <Mnemonic text={entry.text} />
            </span>
            {entry.sub && (
              <svg viewBox="0 0 5 8" className="mr-[10px] ml-auto h-2 w-[5px]" aria-hidden="true">
                <path d="M0 0l5 4-5 4z" />
              </svg>
            )}
          </button>
        )
      )}
    </div>
  );
}

/* ---------- dialog ---------- */

function FoldArrow({ open }: { open?: boolean }) {
  return (
    <svg viewBox="0 0 12 12" className="h-3 w-3 shrink-0 fill-[#3c3c3c]" aria-hidden="true">
      {open ? <path d="M0 3h11L5.5 9z" /> : <path d="M2 0l7 6-7 6z" />}
    </svg>
  );
}

function SaveDialog() {
  return (
    <section
      role="dialog"
      aria-labelledby="dialog-title"
      className="absolute top-[76px] right-[4px] bottom-0 left-[627px] flex flex-col border border-[#d9b688] bg-[#f0f0f0] shadow-[4px_0_3px_#9a938c]"
    >
      <header className="flex h-[30px] shrink-0 items-center bg-white pr-[18px] pl-[10px]">
        <Icon name="logo" className="h-[13px] w-[13px]" />
        <h1 id="dialog-title" className="ml-[6px] flex-1 text-[12px] leading-4">
          Salvar camada vetorial como...
        </h1>
        <button type="button" className="w-[10px] text-[13px]" aria-label="help">
          ?
        </button>
        <button type="button" className="ml-[35px]" aria-label="close">
          <svg viewBox="0 0 11 11" className="h-[11px] w-[11px] stroke-black" aria-hidden="true">
            <path d="M.5.5l10 10M10.5.5l-10 10" />
          </svg>
        </button>
      </header>

      <form className="flex flex-1 flex-col px-[11px] pt-5 pb-3">
        <div className="grid grid-cols-[64px_1fr] items-center pr-[9px] pl-2">
          <label htmlFor="format">Formato</label>
          <Combo id="format" value="Keyhole Markup Language [KML]" className="h-5" />
          <label htmlFor="path" className="whitespace-nowrap">
            Salvar como
          </label>
          <div className="flex h-[41px] items-center gap-[10px]">
            <input id="path" type="text" defaultValue="C:/Users/HP/Desktop/Dados_RN.kml" className={textBox} />
            <PushButton>Buscar</PushButton>
          </div>
          <label htmlFor="crs">SRC</label>
          <div className="flex h-[25px]">
            <Combo id="crs" value="SRC selecionado (EPSG:32722, WGS 84 / UTM zone 22S)" />
            <button type="button" aria-label="choose" className="flex w-[25px] items-center justify-center rounded-[2px] border border-[#949494] bg-[#f4f4f4]">
              <Icon name="crs" className="h-4 w-4" />
            </button>
          </div>
        </div>

        <div className="mt-[15px] flex flex-1 flex-col rounded-[3px] border border-[#b8b8b8] px-[10px] pt-[10px]">
          <div className="flex h-5 items-center">
            <label htmlFor="encoding" className="flex-1">
              Codificação
            </label>
            <Combo id="encoding" value="UTF-8" disabled className="h-5 max-w-[271px]" />
          </div>

          <div className="mt-[6px] flex h-5 items-center gap-1 text-[#8a8a8a]">
            <CheckBox id="selected-only" disabled />
            <label htmlFor="selected-only">Salvar somente feições selecionadas</label>
          </div>
          <div className="flex h-5 items-center gap-1">
            <CheckBox id="skip-attrs" />
            <label htmlFor="skip-attrs">Pular a criação de atributos</label>
          </div>
          <div className="flex h-5 items-center gap-1">
            <CheckBox id="add-to-map" checked />
            <label htmlFor="add-to-map">Adicionar arquivo salvo ao mapa</label>
          </div>

          <div className="mt-[6px] flex h-5 items-center">
            <label htmlFor="symbology" className="flex-1">
              Exportar simbologia
            </label>
            <Combo id="symbology" value="Sem simbologia" className="h-5 max-w-[271px]" />
          </div>

          <div className="mt-[7px] flex h-5 items-center text-[#8a8a8a]">
            <label htmlFor="scale" className="flex-1">
              Escala
            </label>
            <div className="flex h-[19px] max-w-[271px] flex-1 rounded-[2px] border border-[#949494]">
              <input id="scale" type="text" disabled defaultValue="1:50000" className="min-w-0 flex-1 pl-1" />
              <div className="flex w-4 flex-col border-l border-[#949494] text-[#7c7c7c]">
                <button type="button" disabled aria-label="up" className="flex flex-1 items-center justify-center border-b border-[#949494]">
                  <Caret className="rotate-180" />
                </button>
                <button type="button" disabled aria-label="down" className="flex flex-1 items-center justify-center">
                  <Caret />
                </button>
              </div>
            </div>
          </div>

          <div className="mt-[9px] flex h-5 items-center pl-[3px]">
            <FoldArrow />
            <span className="ml-[5px] flex items-center gap-[6px]">
              <CheckBox id="extent" />
              <label htmlFor="extent">Extensão (atual: camada)</label>
            </span>
            <span className="mb-[6px] ml-2 h-px flex-1 bg-[#8d8d8d]" />
          </div>

          <fieldset className="mt-2 flex h-[237px] flex-col rounded-[3px] border border-[#b8b8b8] pr-[10px] pl-[6px]">
            <legend className="-ml-[4px] flex h-5 items-center gap-[5px] pt-[6px] pr-2">
              <FoldArrow open />
              Opções de Fonte de Dados
            </legend>
            <div className="grid grid-cols-[79px_1fr] items-center gap-x-[5px] gap-y-[7px] pt-2">
              <label htmlFor="altitude" className="justify-self-end">
                AltitudeMode
              </label>
              <Combo id="altitude" value="clampToGround" className="h-5" />
              <label htmlFor="description" className="justify-self-end">
                DescriptionField
              </label>
              <input id="description" type="text" defaultValue="Description" className={textBox} />
              <label htmlFor="name" className="justify-self-end">
                NameField
              </label>
              <input id="name" type="text" defaultValue="Name" className={textBox} />
            </div>
          </fieldset>

          <div className="mt-[10px] flex h-5 items-center gap-[5px] pl-[3px]">
            <FoldArrow />
            Opções Customizadas
            <span className="mb-[6px] ml-1 h-px flex-1 bg-[#8d8d8d]" />
          </div>
        </div>

        <footer className="mt-[11px] flex justify-end gap-[10px]">
          <PushButton primary>OK</PushButton>
          <PushButton>Cancelar</PushButton>
          <PushButton>Ajuda</PushButton>
        </footer>
      </form>
    </section>
  );
}

/* ---------- desktop bar ---------- */

const taskIcons: ReactNode[] = [
  <path key="folder" d="M13 9h9l2 2h10v2H13z" fill="#e8b54a" />,
  <circle key="globe" cx="24" cy="17" r="9" fill="#45b5d8" />,
  <path key="store" d="M18 13l12-4v4z" fill="#2b8fd9" />,
  <circle key="disc" cx="24" cy="17" r="9" fill="#e2e4ea" />,
  <circle key="red" cx="24" cy="18" r="8" fill="#b9322c" />,
  <g key="pdf">
    <path d="M11 8h24v5H11z" fill="#f3d3cf" />
    <path d="M22 13l1.500-3 1.500 3z" fill="#c33" />
  </g>,
  <g key="leaf">
    <path d="M14 13q5-4 10-2l-1 2z" fill="#c9c832" />
    <path d="M21 13l9-4 1 4z" fill="#3f9b2f" />
  </g>,
  <path key="paint" d="M12 13q4-3 8-1l2-3 5 1v3z" fill="#d9a066" />,
];

function TaskBar() {
  return (
    <footer className="flex h-[13px] shrink-0 bg-[#101112] pl-[98px]">
      {taskIcons.map((icon, i) => (
        <svg key={i} viewBox="0 0 49 13" className={clsx("h-[13px] w-[49px]", i === 6 && "bg-[#3d3d3d]")} aria-hidden="true">
          {icon}
        </svg>
      ))}
    </footer>
  );
}

export default function App() {
  return (
    <main className="relative flex min-h-screen w-full flex-col overflow-hidden bg-[#f0f0f0] font-['Roboto',sans-serif] text-[11px] leading-[17px] text-black">
      <header className="flex h-6 items-center gap-[6px] bg-white pl-1">
        <Icon name="logo" className="h-[13px] w-[13px]" />
        <span className="text-[12px] leading-4">QGIS 2.8.2-Wien</span>
      </header>
      <nav className="flex h-[22px] items-center gap-[15px] border-b border-[#b8b8b8] pl-[9px]">
        {menus.map((menu) => (
          <button key={menu} type="button" className="whitespace-nowrap">
            <Mnemonic text={menu} />
          </button>
        ))}
      </nav>
      <ToolRow items={fileTools.split(" ")} />
      <ToolRow items={editTools.split(" ")} />
      <ToolRow items={grassTools.split(" ")} />

      <div className="flex flex-1">
        <LayerToolbar />
        <LayersPanel />
        <MapCanvas />
      </div>

      <div className="flex h-[31px] items-center pl-[6px]">
        <span className="w-[411px] shrink-0">Alterna o estado de edição da camada ativa</span>
        <button type="button" aria-label="mouse" className="flex h-[19px] w-[19px] items-center justify-center rounded-[2px] border border-[#777] bg-white">
          <Icon name="mouse" className="h-4 w-4" />
        </button>
        <label htmlFor="coordinate" className="ml-[9px] w-[73px]">
          Coordenada:
        </label>
        <input id="coordinate" type="text" className={textBox} />
      </div>
      <TaskBar />

      <LayerMenu />
      <SaveDialog />
    </main>
  );
}
